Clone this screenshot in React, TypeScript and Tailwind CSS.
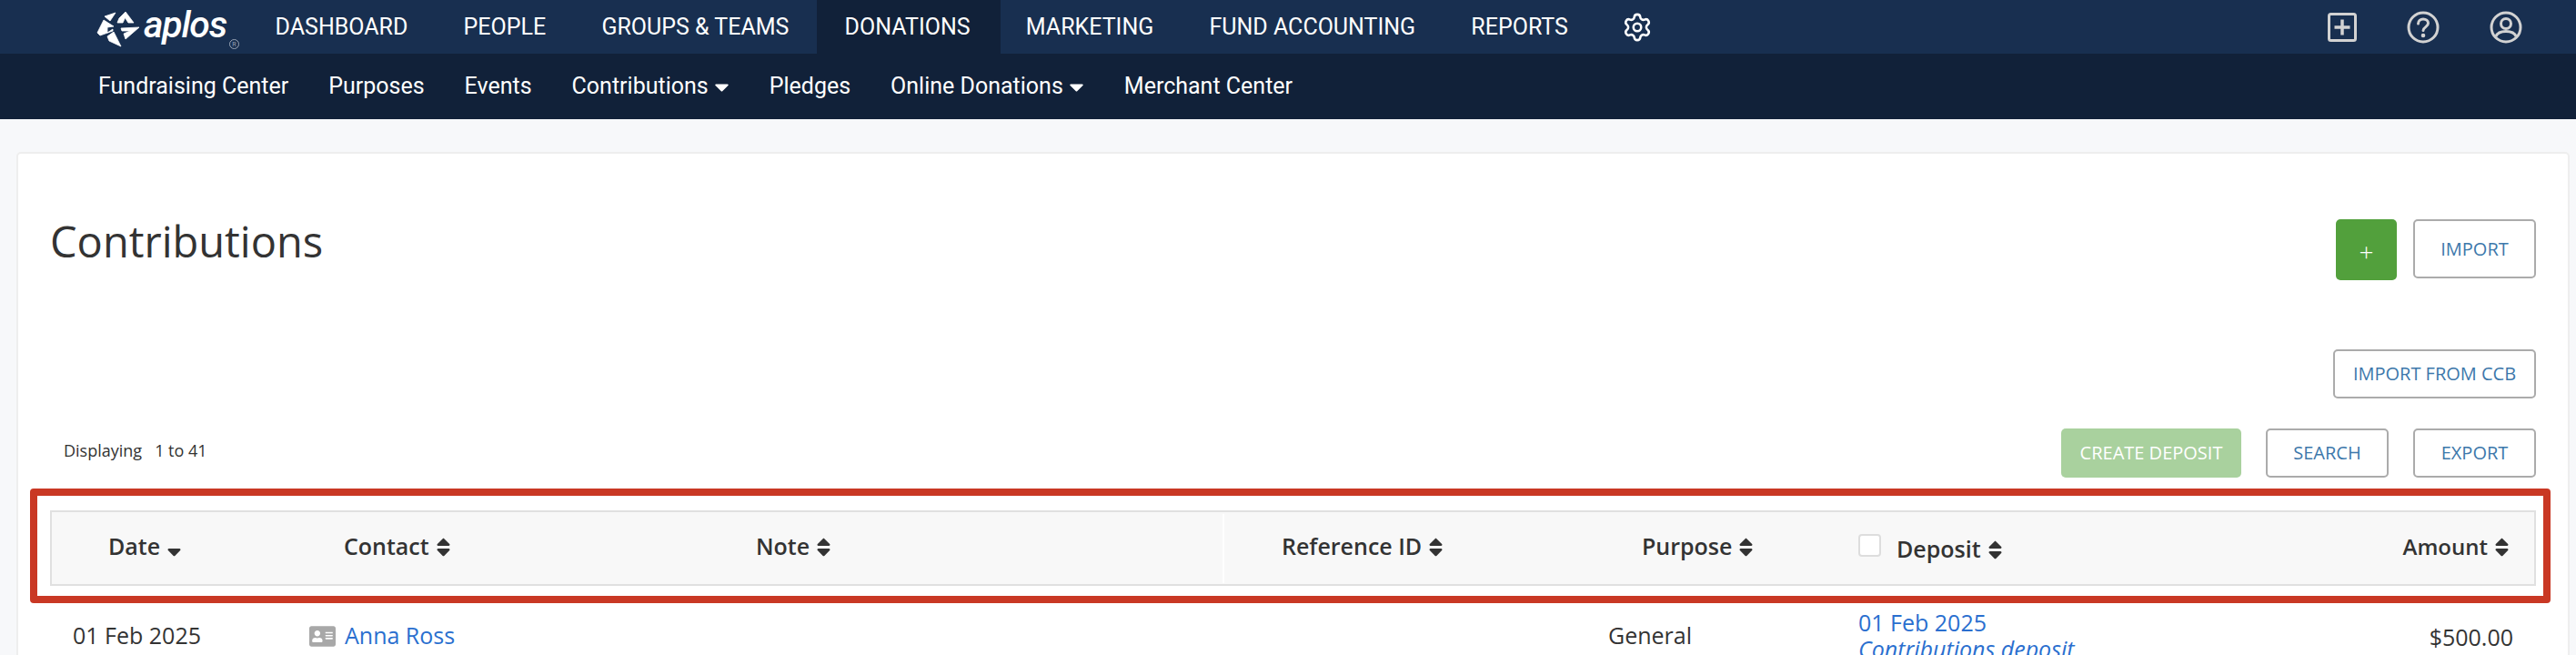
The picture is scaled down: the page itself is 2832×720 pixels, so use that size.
import { FaAddressCard, FaCaretDown, FaSort, FaSortDown } from "react-icons/fa";
import { Settings } from "lucide-react";

const TOP_ITEMS = ["DASHBOARD", "PEOPLE", "GROUPS & TEAMS", "DONATIONS", "MARKETING", "FUND ACCOUNTING", "REPORTS"];

const SUB_ITEMS = [
  { label: "Fundraising Center" },
  { label: "Purposes" },
  { label: "Events" },
  { label: "Contributions", caret: true },
  { label: "Pledges" },
  { label: "Online Donations", caret: true },
  { label: "Merchant Center" },
];

const HEAD_COLS = "grid grid-cols-[283px_460px_544px_424px_275px_1fr]";
const ROW_COLS = "grid grid-cols-[285px_460px_544px_424px_275px_1fr]";

function LogoMark() {
  return (
    <svg width="60" height="50" viewBox="0 0 60 50" fill="#fff" stroke="#fff" strokeWidth="0.800" strokeLinejoin="round" className="mt-[2px] shrink-0">
      <path d="M31 14 L38 7 L47 19 L41 19 L37.500 13.500 L35 19 L29 19 Z" />
      <path d="M15 12 L27 8 L21 17 Z" />
      <path d="M7 30 L14 16 L25 23 L18 24 L18 30 L24 26 L24 28 L10 33 Z" />
      <path d="M18 34 L25 29 L33 45 L20 39 Z" />
      <path d="M33 25 L53 24 L38 37 L36 31 L43 28 L34 28 Z" />
    </svg>
  );
}

function TopIcons() {
  return (
    <div className="ml-auto mr-[59px] flex items-center gap-[55px] text-[#d2d2d2]">
      <svg width="32" height="32" viewBox="0 0 32 32" fill="none" stroke="currentColor" strokeWidth="3">
        <rect x="1.500" y="1.500" width="29" height="29" rx="2" />
        <path d="M16 7.500v17M7.500 16h17" strokeWidth="3.500" />
      </svg>
      <svg width="36" height="36" viewBox="0 0 36 36" fill="none" stroke="currentColor" strokeWidth="3">
        <circle cx="18" cy="18" r="16" />
        <path d="M12.500 14c0-3.200 2.500-5 5.500-5s5.500 1.800 5.500 4.600c0 4-5.500 4-5.500 8" strokeLinecap="round" />
        <circle cx="18" cy="27" r="2.300" fill="currentColor" stroke="none" />
      </svg>
      <svg width="36" height="36" viewBox="0 0 36 36" fill="none" stroke="currentColor" strokeWidth="3">
        <circle cx="18" cy="18" r="16" />
        <circle cx="18" cy="14" r="5.500" />
        <path d="M7 28c1.500-4 5-5.500 11-5.500s9.500 1.500 11 5.500" />
      </svg>
    </div>
  );
}

function Header({ label, pl, sort = FaSort }: { label: string; pl: string; sort?: typeof FaSort }) {
  const Icon = sort;
  return (
    <div className={`flex items-center gap-[3px] ${pl}`}>
      <span>{label}</span>
      <Icon className="text-[25px] text-[#333]" />
    </div>
  );
}

function OutlineButton({ label, width }: { label: string; width: string }) {
  return (
    <button
      type="button"
      className={`${width} h-[54px] rounded-[5px] border-2 border-[#ababab] bg-white text-[20px] text-[#3d78ab]`}
    >
      {label}
    </button>
  );
}

export default function App() {
  return (
    <div className="h-[720px] w-[2832px] overflow-hidden bg-[#f7f8fa] font-['Open_Sans',sans-serif] text-[#333]">
      <nav className="flex h-[59px] items-stretch bg-[#182f50] font-['Roboto',sans-serif] text-[25px] text-white">
        <div className="ml-[100px] flex w-[172px] items-center">
          <LogoMark />
          <span className="relative -ml-[2px] mb-[4px] text-[41px] font-medium italic tracking-[-1.200px]">
            aplos
            <span className="absolute -right-[14px] bottom-[4px] flex h-[11px] w-[11px] items-center justify-center rounded-full border border-[#9aa5b5] text-[7px] font-normal not-italic tracking-normal text-[#9aa5b5]">
              R
            </span>
          </span>
        </div>
        {TOP_ITEMS.map((item) => (
          <div
            key={item}
            className={`flex items-center pl-[30.600px] ${item === "DONATIONS" ? "-mr-[2.400px] bg-[#112139] pr-[33px]" : "pr-[30.600px]"}`}
          >
            {item}
          </div>
        ))}
        <div className="ml-[28px] flex items-center">
          <Settings size={34} strokeWidth={1.800} />
        </div>
        <TopIcons />
      </nav>

      <div className="flex h-[72px] items-center gap-[44px] bg-[#112139] pl-[108px] font-['Roboto',sans-serif] text-[25px] text-white">
        {SUB_ITEMS.map((item) => (
          <div key={item.label} className="flex items-center">
            {item.label}
            {item.caret && <FaCaretDown className="-mr-[4px] ml-[2px] text-[25px]" />}
          </div>
        ))}
      </div>

      <main className="relative ml-[18px] mr-[7px] mt-[36px] h-[600px] rounded-[5px] border-2 border-[#eeeeee] bg-white px-[35px]">
        <div className="flex items-start justify-between pt-[72px]">
          <h1 className="mt-[-10px] text-[47px] font-normal leading-[68px]">Contributions</h1>
          <div className="flex items-start gap-[18px]">
            <button type="button" className="h-[67px] w-[67px] rounded-[5px] bg-[#52a03c] pt-[2px] text-[28px] font-light text-white">
              +
            </button>
            <button type="button" className="h-[65px] w-[135px] rounded-[5px] border-2 border-[#ababab] text-[20px] text-[#3d78ab]">
              IMPORT
            </button>
          </div>
        </div>

        <div className="mt-[76px] flex justify-end">
          <OutlineButton label="IMPORT FROM CCB" width="w-[223px]" />
        </div>

        <div className="mt-[33px] flex items-center justify-between">
          <p className="mb-[6px] pl-[15px] text-[18px]">Displaying&nbsp;&nbsp; 1 to 41</p>
          <div className="flex gap-[27px]">
            <button type="button" className="h-[54px] w-[198px] rounded-[5px] bg-[#a9d19e] text-[20px] text-white">
              CREATE DEPOSIT
            </button>
            <OutlineButton label="SEARCH" width="w-[135px]" />
            <OutlineButton label="EXPORT" width="w-[135px]" />
          </div>
        </div>

        <div className={`${HEAD_COLS} mt-[36px] h-[83px] items-center border-2 border-[#e0e0e0] bg-[#f8f8f8] pb-[3px] text-[25px] font-semibold`}>
          <Header label="Date" pl="pl-[62px]" sort={FaSortDown} />
          <Header label="Contact" pl="pl-[38px]" />
          <Header label="Note" pl="pl-[31px]" />
          <div className="-mb-[3px] flex h-full items-center border-l-2 border-white pb-[3px]">
            <Header label="Reference ID" pl="pl-[63px]" />
          </div>
          <Header label="Purpose" pl="pl-[37px]" />
          <div className="flex items-center">
            <span className="mb-[3px] h-[25px] w-[25px] rounded-[4px] border-2 border-[#dddddd] bg-white" />
            <div className="mt-[6px]">
              <Header label="Deposit" pl="pl-[17px]" />
            </div>
          </div>
          <div className="absolute right-[60px] flex items-center gap-[3px] text-[24px]">
            <span>Amount</span>
            <FaSort className="text-[25px] text-[#333]" />
          </div>
        </div>

        <div className={`${ROW_COLS} mt-[26px] items-center text-[25px]`}>
          <div className="pl-[25px]">01 Feb 2025</div>
          <div className="flex items-center gap-[10px]">
            <FaAddressCard className="text-[29px] text-[#a8a8a8]" />
            <span className="text-[#2a6fcf]">Anna Ross</span>
          </div>
          <div />
          <div />
          <div>General</div>
          <div className="text-[#2a6fcf]">
            <div className="leading-[29px]">01 Feb 2025</div>
            <div className="italic leading-[29px]">Contributions deposit</div>
          </div>
        </div>
        <div className="absolute right-[60px] top-[513px] text-[25px]">$500.00</div>

        <div className="pointer-events-none absolute left-[13px] top-[368px] h-[126px] w-[2771px] rounded-[4px] border-[8px] border-[#c93824]" />
      </main>
    </div>
  );
}
